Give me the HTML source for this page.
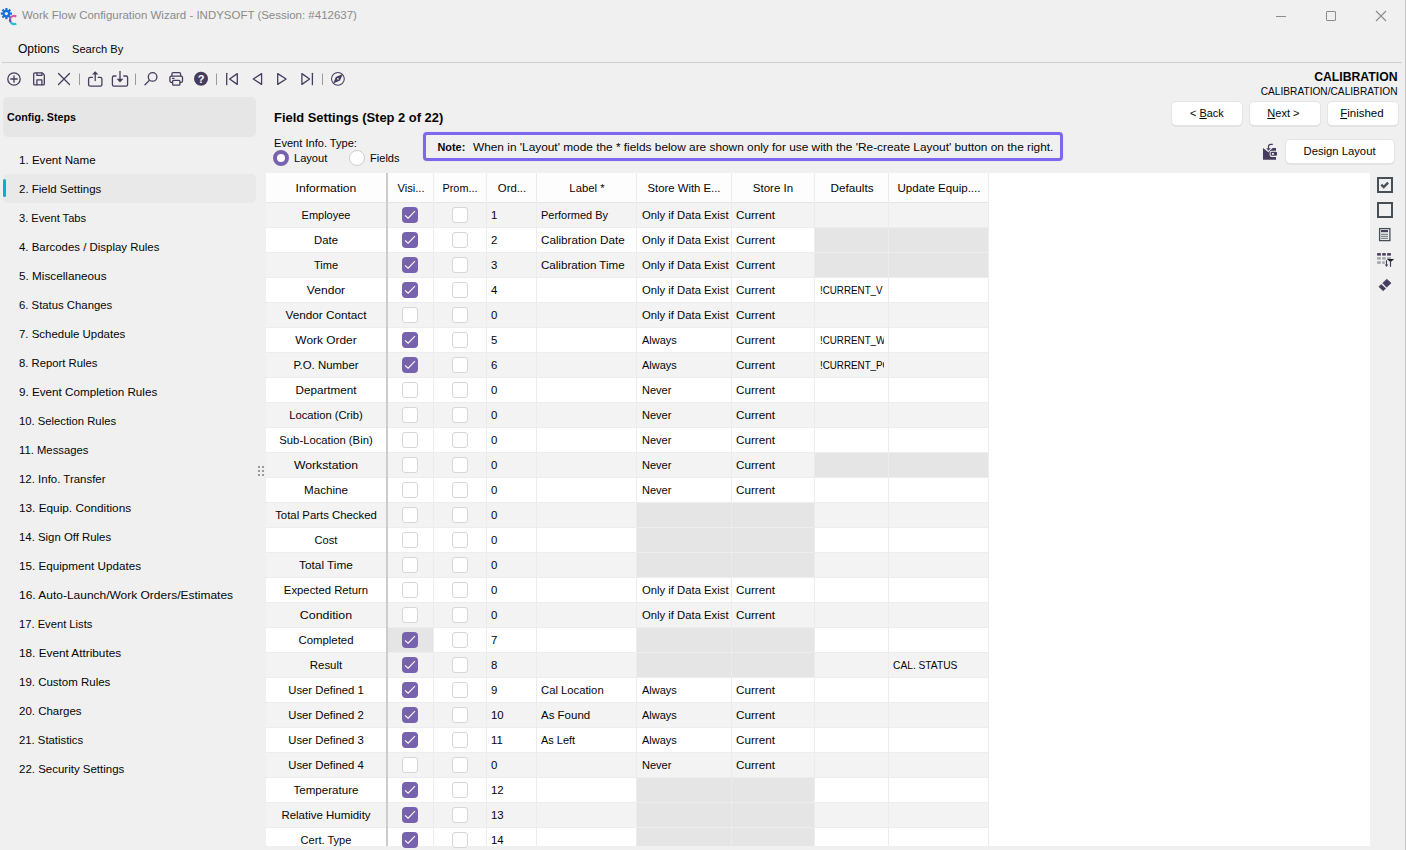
<!DOCTYPE html>
<html><head><meta charset="utf-8"><title>Work Flow Configuration Wizard</title>
<style>
html,body{margin:0;padding:0;}
body{width:1406px;height:850px;overflow:hidden;background:#f0f0f0;position:relative;font-family:"Liberation Sans",sans-serif;color:#050505;}
.t{position:absolute;white-space:nowrap;line-height:1;}
.a{position:absolute;}
.cb{position:absolute;width:14px;height:14px;border:1px solid #d6d6d6;border-radius:3px;background:#fff;}
.cbc{position:absolute;width:16px;height:16px;border-radius:4px;background:#7762ae;}
.btn{position:absolute;background:#fff;border-radius:4px;box-shadow:0 0 0 1px #e4e4e4, 0 1px 0 0.6px #d6d6d6;}
.clip{position:absolute;overflow:hidden;white-space:nowrap;line-height:1;}
</style></head><body>

<svg class="a" style="left:0;top:6px" width="20" height="20" viewBox="0 0 20 20">
<g fill="#1b6fd8"><circle cx="6.4" cy="7.6" r="3.9"/>
<rect x="5.3" y="2" width="2.2" height="11.2"/><rect x="0.8" y="6.5" width="11.2" height="2.2"/>
<rect x="5.3" y="2" width="2.2" height="11.2" transform="rotate(45 6.4 7.6)"/><rect x="5.3" y="2" width="2.2" height="11.2" transform="rotate(-45 6.4 7.6)"/></g>
<circle cx="6.4" cy="7.6" r="1.6" fill="#f0f0f0"/>
<path d="M16.3 10.6 A3.9 3.9 0 0 0 10.4 12.2" stroke="#e0559c" stroke-width="2.1" fill="none"/>
<path d="M10.4 12.2 A3.9 3.9 0 0 0 10.9 16.4" stroke="#6a4fa8" stroke-width="2.1" fill="none"/>
<path d="M10.9 16.4 A3.9 3.9 0 0 0 16.3 17.6" stroke="#1ec0e0" stroke-width="2.1" fill="none"/>
</svg>
<div class="t" style="left:22px;top:9.99px;font-size:11.47px;color:#8a8a8a;">Work Flow Configuration Wizard - INDYSOFT (Session: #412637)</div>
<div class="a" style="left:1276px;top:16px;width:10px;height:1px;background:#8c8c8c"></div>
<div class="a" style="left:1326px;top:11px;width:8px;height:8px;border:1px solid #8c8c8c;border-radius:1px"></div>
<svg class="a" style="left:1375px;top:10px" width="12" height="12" viewBox="0 0 12 12"><path d="M1 1L11 11M11 1L1 11" stroke="#8c8c8c" stroke-width="1.1"/></svg>
<div class="a" style="left:1405px;top:0;width:1px;height:850px;background:#c4c4c4"></div>
<div class="t" style="left:18px;top:42.81px;font-size:12.04px;">Options</div>
<div class="t" style="left:72px;top:43.60px;font-size:11.1px;">Search By</div>
<div class="a" style="left:2px;top:62px;width:1400px;height:1px;background:#cfcfcf"></div>
<svg class="a" style="left:0;top:64px" width="360" height="30" viewBox="0 64 360 30">
<g fill="none" stroke="#463c5e" stroke-width="1.3" stroke-linejoin="round" stroke-linecap="round">
<circle cx="14" cy="79" r="6.2"/><path d="M14 75.8v6.4M10.8 79h6.4"/>
<path d="M34.9 72.9H42.3L44.3 74.9V84Q44.3 84.9 43.4 84.9H34.6Q33.7 84.9 33.7 84V74.1Q33.7 72.9 34.9 72.9Z"/>
<path d="M36.9 73.2V75.4H41.9V73.2M36.9 84.7V79.8H41.9V84.7"/>
<path d="M58.5 73.5L69.5 84.5M69.5 73.5L58.5 84.5"/>
<path d="M92.5 77.3H90.3Q88.6 77.3 88.6 79V84.6Q88.6 86.2 90.3 86.2H100.3Q101.9 86.2 101.9 84.6V79Q101.9 77.3 100.3 77.3H98.2"/><path d="M95.2 80.6V73"/>
<path d="M116 76H114Q112.4 76 112.4 77.7V84.6Q112.4 86.2 114 86.2H126Q127.6 86.2 127.6 84.6V77.7Q127.6 76 126 76H123.8"/><path d="M120 71.5V79.5"/>
<circle cx="152.6" cy="76.9" r="4.3"/><path d="M149.3 80.4L145 84.8"/>
<path d="M171.9 75.8V73.9Q171.9 72.6 173.2 72.6H179.3Q180.6 72.6 180.6 73.9V75.8"/>
<path d="M172 82.4H171.3Q169.9 82.4 169.9 81V77.5Q169.9 76.1 171.3 76.1H181.1Q182.5 76.1 182.5 77.5V81Q182.5 82.4 181.1 82.4H180.4"/>
<rect x="172.6" y="80.3" width="7.3" height="4.9" rx="1"/>
<path d="M172.5 78.3H174"/>
<path d="M226.7 73.3V84.7"/><path d="M237.3 73.6V84.4L229.6 79Z"/>
<path d="M261.6 73.6V84.4L253.2 79Z"/>
<path d="M277.7 73.6V84.4L286.1 79Z"/>
<path d="M301.9 73.6V84.4L309.6 79Z"/><path d="M312.4 73.3V84.7"/>
</g>
<circle cx="337.9" cy="78.8" r="6.4" fill="none" stroke="#463c5e" stroke-width="1.05"/>
<path d="M342.8 74.1L340 80.6 333.1 83.5 335.9 77Z" fill="#463c5e"/><circle cx="337.95" cy="78.8" r="0.9" fill="#f0f0f0"/>
<path d="M92 74.6L95.2 71.2 98.4 74.6Z" fill="#463c5e"/>
<path d="M116.6 78.7L120 82.4 123.4 78.7Z" fill="#463c5e"/>
<g stroke="#9a9a9a" stroke-width="1"><path d="M79.5 73.5v11.5M135.5 73.5v11.5M216.5 73.5v11.5M322.5 73.5v11.5"/></g>
<circle cx="201" cy="78.8" r="7" fill="#463c5e"/>
<text x="201" y="83" font-family="Liberation Sans" font-weight="bold" font-size="11" fill="#fff" text-anchor="middle">?</text>
</svg>
<div class="a" style="left:3px;top:97px;width:253px;height:40px;background:#e6e6e6;border-radius:5px"></div>
<div class="t" style="left:7px;top:111.93px;font-size:10.71px;font-weight:bold;">Config. Steps</div>
<div class="a" style="left:3px;top:174px;width:253px;height:29px;background:#e9e9e9;border-radius:5px"></div>
<div class="a" style="left:3px;top:179px;width:3px;height:18px;background:#00b0d8;border-radius:2px"></div>
<div class="t" style="top:154.85px;font-size:11.4px;left:19px;transform-origin:0 0;transform:scaleX(1.0173);">1. Event Name</div>
<div class="t" style="top:183.85px;font-size:11.4px;left:19px;transform-origin:0 0;transform:scaleX(1.0069);">2. Field Settings</div>
<div class="t" style="top:212.85px;font-size:11.4px;left:19px;transform-origin:0 0;transform:scaleX(0.9744);">3. Event Tabs</div>
<div class="t" style="top:241.85px;font-size:11.4px;left:19px;transform-origin:0 0;transform:scaleX(1.0034);">4. Barcodes / Display Rules</div>
<div class="t" style="top:270.85px;font-size:11.4px;left:19px;transform-origin:0 0;transform:scaleX(1.0317);">5. Miscellaneous</div>
<div class="t" style="top:299.85px;font-size:11.4px;left:19px;transform-origin:0 0;transform:scaleX(0.9948);">6. Status Changes</div>
<div class="t" style="top:328.85px;font-size:11.4px;left:19px;transform-origin:0 0;transform:scaleX(1.0044);">7. Schedule Updates</div>
<div class="t" style="top:357.85px;font-size:11.4px;left:19px;transform-origin:0 0;transform:scaleX(0.9899);">8. Report Rules</div>
<div class="t" style="top:386.85px;font-size:11.4px;left:19px;transform-origin:0 0;transform:scaleX(1.0255);">9. Event Completion Rules</div>
<div class="t" style="top:415.85px;font-size:11.4px;left:19px;transform-origin:0 0;transform:scaleX(0.9886);">10. Selection Rules</div>
<div class="t" style="top:444.85px;font-size:11.4px;left:19px;transform-origin:0 0;transform:scaleX(0.9897);">11. Messages</div>
<div class="t" style="top:473.85px;font-size:11.4px;left:19px;transform-origin:0 0;transform:scaleX(1.0050);">12. Info. Transfer</div>
<div class="t" style="top:502.85px;font-size:11.4px;left:19px;transform-origin:0 0;transform:scaleX(1.0354);">13. Equip. Conditions</div>
<div class="t" style="top:531.85px;font-size:11.4px;left:19px;transform-origin:0 0;transform:scaleX(0.9989);">14. Sign Off Rules</div>
<div class="t" style="top:560.85px;font-size:11.4px;left:19px;transform-origin:0 0;transform:scaleX(1.0257);">15. Equipment Updates</div>
<div class="t" style="top:589.85px;font-size:11.4px;left:19px;transform-origin:0 0;transform:scaleX(1.0510);">16. Auto-Launch/Work Orders/Estimates</div>
<div class="t" style="top:618.85px;font-size:11.4px;left:19px;transform-origin:0 0;transform:scaleX(0.9817);">17. Event Lists</div>
<div class="t" style="top:647.85px;font-size:11.4px;left:19px;transform-origin:0 0;transform:scaleX(1.0338);">18. Event Attributes</div>
<div class="t" style="top:676.85px;font-size:11.4px;left:19px;transform-origin:0 0;transform:scaleX(1.0088);">19. Custom Rules</div>
<div class="t" style="top:705.85px;font-size:11.4px;left:19px;transform-origin:0 0;transform:scaleX(1.0081);">20. Charges</div>
<div class="t" style="top:734.85px;font-size:11.4px;left:19px;transform-origin:0 0;transform:scaleX(0.9934);">21. Statistics</div>
<div class="t" style="top:763.85px;font-size:11.4px;left:19px;transform-origin:0 0;transform:scaleX(1.0081);">22. Security Settings</div>
<div class="a" style="left:258px;top:466px;width:2px;height:2px;background:#9a9a9a"></div>
<div class="a" style="left:262px;top:466px;width:2px;height:2px;background:#9a9a9a"></div>
<div class="a" style="left:258px;top:470px;width:2px;height:2px;background:#9a9a9a"></div>
<div class="a" style="left:262px;top:470px;width:2px;height:2px;background:#9a9a9a"></div>
<div class="a" style="left:258px;top:474px;width:2px;height:2px;background:#9a9a9a"></div>
<div class="a" style="left:262px;top:474px;width:2px;height:2px;background:#9a9a9a"></div>
<div class="t" style="left:274px;top:112.06px;font-size:12.92px;font-weight:bold;">Field Settings (Step 2 of 22)</div>
<div class="t" style="left:274px;top:137.61px;font-size:11.09px;">Event Info. Type:</div>
<div class="a" style="left:273px;top:150px;width:8px;height:8px;border:4px solid #7762ae;border-radius:50%;background:#fff"></div>
<div class="t" style="left:294px;top:152.61px;font-size:11.09px;">Layout</div>
<div class="a" style="left:349px;top:150px;width:14px;height:14px;border:1px solid #cfcfcf;border-radius:50%;background:#fff"></div>
<div class="t" style="left:370px;top:152.61px;font-size:11.09px;">Fields</div>
<div class="a" style="left:423px;top:132px;width:634px;height:23px;border:3px solid #7b68ee;border-radius:4px;box-shadow:0 0 1px rgba(0,0,0,.25)"></div>
<div class="t" style="left:437.5px;top:141.99px;font-size:10.88px;font-weight:bold;">Note:</div>
<div class="t" style="top:141.55px;font-size:11.4px;left:473px;transform-origin:0 0;transform:scaleX(1.0407);">When in 'Layout' mode the * fields below are shown only for use with the 'Re-create Layout' button on the right.</div>
<div class="t" style="right:8.5px;text-align:right;top:70.64px;font-size:12.24px;font-weight:bold;">CALIBRATION</div>
<div class="t" style="right:8.5px;text-align:right;top:87.19px;font-size:10.17px;">CALIBRATION/CALIBRATION</div>
<div class="btn" style="left:1172px;top:102px;width:70px;height:23px"></div>
<div class="btn" style="left:1250px;top:102px;width:70px;height:23px"></div>
<div class="btn" style="left:1328px;top:102px;width:70px;height:23px"></div>
<div class="t" style="left:1190px;top:107.97px;font-size:10.9px;">&lt; <u>B</u>ack</div>
<div class="t" style="left:1267.3px;top:107.85px;font-size:11.04px;"><u>N</u>ext &gt;</div>
<div class="t" style="left:1340.2px;top:108.08px;font-size:11.48px;"><u>F</u>inished</div>
<div class="btn" style="left:1286px;top:140px;width:108px;height:23px"></div>
<div class="t" style="left:1303.5px;top:145.85px;font-size:11.28px;">Design Layout</div>
<svg class="a" style="left:1258px;top:140px" width="24" height="24" viewBox="0 0 24 24">
<path d="M5 8L10.5 12.2 14.6 8H18V19.8H5Z" fill="#463c5e"/>
<rect x="11.6" y="10.7" width="9" height="6.2" rx="2.2" fill="#f0f0f0"/>
<rect x="12.6" y="11.8" width="6.4" height="4" rx="1.2" fill="#463c5e"/>
<rect x="14" y="13" width="1.9" height="1.7" fill="#f0f0f0"/>
<path d="M14.8 4.4H12.6Q10.5 4.4 10.5 6.5V8.6" stroke="#463c5e" stroke-width="1.2" fill="none"/>
<path d="M8.2 8.3H12.8L10.5 10.7Z" fill="#463c5e"/>
</svg>
<div class="a" style="left:266px;top:173px;width:1104px;height:673px;background:#fff"></div>
<div class="a" style="left:266px;top:173px;width:722px;height:29px;background:#fdfdfd"></div>
<div class="a" style="left:266px;top:202px;width:722px;height:1px;background:#e6e6e6"></div>
<div class="t" style="top:183.35px;font-size:11.4px;left:176.0px;width:300px;text-align:center;transform:scaleX(1.0662);">Information</div>
<div class="t" style="top:183.35px;font-size:11.4px;left:260.5px;width:300px;text-align:center;transform:scaleX(0.9796);">Visi...</div>
<div class="t" style="top:183.35px;font-size:11.4px;left:310.0px;width:300px;text-align:center;transform:scaleX(0.9527);">Prom...</div>
<div class="t" style="top:183.35px;font-size:11.4px;left:361.5px;width:300px;text-align:center;transform:scaleX(0.9964);">Ord...</div>
<div class="t" style="top:183.35px;font-size:11.4px;left:436.5px;width:300px;text-align:center;transform:scaleX(0.9945);">Label *</div>
<div class="t" style="top:183.35px;font-size:11.4px;left:534.0px;width:300px;text-align:center;transform:scaleX(0.9948);">Store With E...</div>
<div class="t" style="top:183.35px;font-size:11.4px;left:623.0px;width:300px;text-align:center;transform:scaleX(1.0095);">Store In</div>
<div class="t" style="top:183.35px;font-size:11.4px;left:701.5px;width:300px;text-align:center;transform:scaleX(1.0306);">Defaults</div>
<div class="t" style="top:183.35px;font-size:11.4px;left:788.5px;width:300px;text-align:center;transform:scaleX(1.0165);">Update Equip....</div>
<div class="a" style="left:266px;top:203px;width:722px;height:24px;background:#f3f3f3"></div>
<div class="t" style="top:210.35px;font-size:11.4px;left:176px;width:300px;text-align:center;transform:scaleX(0.9647);">Employee</div>
<svg class="a" style="left:402px;top:207px" width="16" height="16" viewBox="0 0 16 16"><rect width="16" height="16" rx="4" fill="#7762ae"/><path d="M3 8.3L6.1 11.2 13 4.2" stroke="#fff" stroke-width="1.05" fill="none"/></svg>
<div class="cb" style="left:452px;top:207px"></div>
<div class="t" style="left:491px;top:210.35px;font-size:11.4px;">1</div>
<div class="t" style="top:210.35px;font-size:11.4px;left:541px;transform-origin:0 0;transform:scaleX(0.9629);">Performed By</div>
<div class="t" style="top:210.35px;font-size:11.4px;left:641.6px;transform-origin:0 0;transform:scaleX(0.9906);">Only if Data Exist</div>
<div class="t" style="top:210.35px;font-size:11.4px;left:736.4px;transform-origin:0 0;transform:scaleX(1.0260);">Current</div>
<div class="a" style="left:266px;top:228px;width:722px;height:24px;background:#ffffff"></div>
<div class="a" style="left:266px;top:227px;width:722px;height:1px;background:#ededed"></div>
<div class="a" style="left:815px;top:228px;width:73px;height:24px;background:#e5e5e5"></div>
<div class="a" style="left:889px;top:228px;width:99px;height:24px;background:#e5e5e5"></div>
<div class="t" style="top:235.35px;font-size:11.4px;left:176px;width:300px;text-align:center;transform:scaleX(0.9884);">Date</div>
<svg class="a" style="left:402px;top:232px" width="16" height="16" viewBox="0 0 16 16"><rect width="16" height="16" rx="4" fill="#7762ae"/><path d="M3 8.3L6.1 11.2 13 4.2" stroke="#fff" stroke-width="1.05" fill="none"/></svg>
<div class="cb" style="left:452px;top:232px"></div>
<div class="t" style="left:491px;top:235.35px;font-size:11.4px;">2</div>
<div class="t" style="top:235.35px;font-size:11.4px;left:541px;transform-origin:0 0;transform:scaleX(1.0240);">Calibration Date</div>
<div class="t" style="top:235.35px;font-size:11.4px;left:641.6px;transform-origin:0 0;transform:scaleX(0.9906);">Only if Data Exist</div>
<div class="t" style="top:235.35px;font-size:11.4px;left:736.4px;transform-origin:0 0;transform:scaleX(1.0260);">Current</div>
<div class="a" style="left:266px;top:253px;width:722px;height:24px;background:#f3f3f3"></div>
<div class="a" style="left:266px;top:252px;width:722px;height:1px;background:#ededed"></div>
<div class="a" style="left:815px;top:253px;width:73px;height:24px;background:#e5e5e5"></div>
<div class="a" style="left:889px;top:253px;width:99px;height:24px;background:#e5e5e5"></div>
<div class="t" style="top:260.35px;font-size:11.4px;left:176px;width:300px;text-align:center;transform:scaleX(0.9675);">Time</div>
<svg class="a" style="left:402px;top:257px" width="16" height="16" viewBox="0 0 16 16"><rect width="16" height="16" rx="4" fill="#7762ae"/><path d="M3 8.3L6.1 11.2 13 4.2" stroke="#fff" stroke-width="1.05" fill="none"/></svg>
<div class="cb" style="left:452px;top:257px"></div>
<div class="t" style="left:491px;top:260.35px;font-size:11.4px;">3</div>
<div class="t" style="top:260.35px;font-size:11.4px;left:541px;transform-origin:0 0;transform:scaleX(1.0163);">Calibration Time</div>
<div class="t" style="top:260.35px;font-size:11.4px;left:641.6px;transform-origin:0 0;transform:scaleX(0.9906);">Only if Data Exist</div>
<div class="t" style="top:260.35px;font-size:11.4px;left:736.4px;transform-origin:0 0;transform:scaleX(1.0260);">Current</div>
<div class="a" style="left:266px;top:278px;width:722px;height:24px;background:#ffffff"></div>
<div class="a" style="left:266px;top:277px;width:722px;height:1px;background:#ededed"></div>
<div class="t" style="top:285.35px;font-size:11.4px;left:176px;width:300px;text-align:center;transform:scaleX(1.0601);">Vendor</div>
<svg class="a" style="left:402px;top:282px" width="16" height="16" viewBox="0 0 16 16"><rect width="16" height="16" rx="4" fill="#7762ae"/><path d="M3 8.3L6.1 11.2 13 4.2" stroke="#fff" stroke-width="1.05" fill="none"/></svg>
<div class="cb" style="left:452px;top:282px"></div>
<div class="t" style="left:491px;top:285.35px;font-size:11.4px;">4</div>
<div class="t" style="top:285.35px;font-size:11.4px;left:641.6px;transform-origin:0 0;transform:scaleX(0.9906);">Only if Data Exist</div>
<div class="t" style="top:285.35px;font-size:11.4px;left:736.4px;transform-origin:0 0;transform:scaleX(1.0260);">Current</div>
<div class="clip" style="left:819.7px;top:285.35px;width:64.3px;height:16px;font-size:11.4px"><div style="transform-origin:0 0;transform:scaleX(0.86)">!CURRENT_V</div></div>
<div class="a" style="left:266px;top:303px;width:722px;height:24px;background:#f3f3f3"></div>
<div class="a" style="left:266px;top:302px;width:722px;height:1px;background:#ededed"></div>
<div class="t" style="top:310.35px;font-size:11.4px;left:176px;width:300px;text-align:center;transform:scaleX(1.0308);">Vendor Contact</div>
<div class="cb" style="left:402px;top:307px"></div>
<div class="cb" style="left:452px;top:307px"></div>
<div class="t" style="left:491px;top:310.35px;font-size:11.4px;">0</div>
<div class="t" style="top:310.35px;font-size:11.4px;left:641.6px;transform-origin:0 0;transform:scaleX(0.9906);">Only if Data Exist</div>
<div class="t" style="top:310.35px;font-size:11.4px;left:736.4px;transform-origin:0 0;transform:scaleX(1.0260);">Current</div>
<div class="a" style="left:266px;top:328px;width:722px;height:24px;background:#ffffff"></div>
<div class="a" style="left:266px;top:327px;width:722px;height:1px;background:#ededed"></div>
<div class="t" style="top:335.35px;font-size:11.4px;left:176px;width:300px;text-align:center;transform:scaleX(1.0444);">Work Order</div>
<svg class="a" style="left:402px;top:332px" width="16" height="16" viewBox="0 0 16 16"><rect width="16" height="16" rx="4" fill="#7762ae"/><path d="M3 8.3L6.1 11.2 13 4.2" stroke="#fff" stroke-width="1.05" fill="none"/></svg>
<div class="cb" style="left:452px;top:332px"></div>
<div class="t" style="left:491px;top:335.35px;font-size:11.4px;">5</div>
<div class="t" style="top:335.35px;font-size:11.4px;left:641.6px;transform-origin:0 0;transform:scaleX(0.9637);">Always</div>
<div class="t" style="top:335.35px;font-size:11.4px;left:736.4px;transform-origin:0 0;transform:scaleX(1.0260);">Current</div>
<div class="clip" style="left:819.7px;top:335.35px;width:64.3px;height:16px;font-size:11.4px"><div style="transform-origin:0 0;transform:scaleX(0.86)">!CURRENT_W</div></div>
<div class="a" style="left:266px;top:353px;width:722px;height:24px;background:#f3f3f3"></div>
<div class="a" style="left:266px;top:352px;width:722px;height:1px;background:#ededed"></div>
<div class="t" style="top:360.35px;font-size:11.4px;left:176px;width:300px;text-align:center;transform:scaleX(1.0024);">P.O. Number</div>
<svg class="a" style="left:402px;top:357px" width="16" height="16" viewBox="0 0 16 16"><rect width="16" height="16" rx="4" fill="#7762ae"/><path d="M3 8.3L6.1 11.2 13 4.2" stroke="#fff" stroke-width="1.05" fill="none"/></svg>
<div class="cb" style="left:452px;top:357px"></div>
<div class="t" style="left:491px;top:360.35px;font-size:11.4px;">6</div>
<div class="t" style="top:360.35px;font-size:11.4px;left:641.6px;transform-origin:0 0;transform:scaleX(0.9637);">Always</div>
<div class="t" style="top:360.35px;font-size:11.4px;left:736.4px;transform-origin:0 0;transform:scaleX(1.0260);">Current</div>
<div class="clip" style="left:819.7px;top:360.35px;width:64.3px;height:16px;font-size:11.4px"><div style="transform-origin:0 0;transform:scaleX(0.86)">!CURRENT_PO</div></div>
<div class="a" style="left:266px;top:378px;width:722px;height:24px;background:#ffffff"></div>
<div class="a" style="left:266px;top:377px;width:722px;height:1px;background:#ededed"></div>
<div class="t" style="top:385.35px;font-size:11.4px;left:176px;width:300px;text-align:center;transform:scaleX(1.0259);">Department</div>
<div class="cb" style="left:402px;top:382px"></div>
<div class="cb" style="left:452px;top:382px"></div>
<div class="t" style="left:491px;top:385.35px;font-size:11.4px;">0</div>
<div class="t" style="top:385.35px;font-size:11.4px;left:641.6px;transform-origin:0 0;transform:scaleX(0.9669);">Never</div>
<div class="t" style="top:385.35px;font-size:11.4px;left:736.4px;transform-origin:0 0;transform:scaleX(1.0260);">Current</div>
<div class="a" style="left:266px;top:403px;width:722px;height:24px;background:#f3f3f3"></div>
<div class="a" style="left:266px;top:402px;width:722px;height:1px;background:#ededed"></div>
<div class="t" style="top:410.35px;font-size:11.4px;left:176px;width:300px;text-align:center;transform:scaleX(0.9859);">Location (Crib)</div>
<div class="cb" style="left:402px;top:407px"></div>
<div class="cb" style="left:452px;top:407px"></div>
<div class="t" style="left:491px;top:410.35px;font-size:11.4px;">0</div>
<div class="t" style="top:410.35px;font-size:11.4px;left:641.6px;transform-origin:0 0;transform:scaleX(0.9669);">Never</div>
<div class="t" style="top:410.35px;font-size:11.4px;left:736.4px;transform-origin:0 0;transform:scaleX(1.0260);">Current</div>
<div class="a" style="left:266px;top:428px;width:722px;height:24px;background:#ffffff"></div>
<div class="a" style="left:266px;top:427px;width:722px;height:1px;background:#ededed"></div>
<div class="t" style="top:435.35px;font-size:11.4px;left:176px;width:300px;text-align:center;transform:scaleX(0.9893);">Sub-Location (Bin)</div>
<div class="cb" style="left:402px;top:432px"></div>
<div class="cb" style="left:452px;top:432px"></div>
<div class="t" style="left:491px;top:435.35px;font-size:11.4px;">0</div>
<div class="t" style="top:435.35px;font-size:11.4px;left:641.6px;transform-origin:0 0;transform:scaleX(0.9669);">Never</div>
<div class="t" style="top:435.35px;font-size:11.4px;left:736.4px;transform-origin:0 0;transform:scaleX(1.0260);">Current</div>
<div class="a" style="left:266px;top:453px;width:722px;height:24px;background:#f3f3f3"></div>
<div class="a" style="left:266px;top:452px;width:722px;height:1px;background:#ededed"></div>
<div class="a" style="left:815px;top:453px;width:73px;height:24px;background:#e5e5e5"></div>
<div class="a" style="left:889px;top:453px;width:99px;height:24px;background:#e5e5e5"></div>
<div class="t" style="top:460.35px;font-size:11.4px;left:176px;width:300px;text-align:center;transform:scaleX(1.0705);">Workstation</div>
<div class="cb" style="left:402px;top:457px"></div>
<div class="cb" style="left:452px;top:457px"></div>
<div class="t" style="left:491px;top:460.35px;font-size:11.4px;">0</div>
<div class="t" style="top:460.35px;font-size:11.4px;left:641.6px;transform-origin:0 0;transform:scaleX(0.9669);">Never</div>
<div class="t" style="top:460.35px;font-size:11.4px;left:736.4px;transform-origin:0 0;transform:scaleX(1.0260);">Current</div>
<div class="a" style="left:266px;top:478px;width:722px;height:24px;background:#ffffff"></div>
<div class="a" style="left:266px;top:477px;width:722px;height:1px;background:#ededed"></div>
<div class="t" style="top:485.35px;font-size:11.4px;left:176px;width:300px;text-align:center;transform:scaleX(1.0212);">Machine</div>
<div class="cb" style="left:402px;top:482px"></div>
<div class="cb" style="left:452px;top:482px"></div>
<div class="t" style="left:491px;top:485.35px;font-size:11.4px;">0</div>
<div class="t" style="top:485.35px;font-size:11.4px;left:641.6px;transform-origin:0 0;transform:scaleX(0.9669);">Never</div>
<div class="t" style="top:485.35px;font-size:11.4px;left:736.4px;transform-origin:0 0;transform:scaleX(1.0260);">Current</div>
<div class="a" style="left:266px;top:503px;width:722px;height:24px;background:#f3f3f3"></div>
<div class="a" style="left:266px;top:502px;width:722px;height:1px;background:#ededed"></div>
<div class="a" style="left:637px;top:503px;width:94px;height:24px;background:#e5e5e5"></div>
<div class="a" style="left:732px;top:503px;width:82px;height:24px;background:#e5e5e5"></div>
<div class="t" style="top:510.35px;font-size:11.4px;left:176px;width:300px;text-align:center;transform:scaleX(0.9970);">Total Parts Checked</div>
<div class="cb" style="left:402px;top:507px"></div>
<div class="cb" style="left:452px;top:507px"></div>
<div class="t" style="left:491px;top:510.35px;font-size:11.4px;">0</div>
<div class="a" style="left:266px;top:528px;width:722px;height:24px;background:#ffffff"></div>
<div class="a" style="left:266px;top:527px;width:722px;height:1px;background:#ededed"></div>
<div class="a" style="left:637px;top:528px;width:94px;height:24px;background:#e5e5e5"></div>
<div class="a" style="left:732px;top:528px;width:82px;height:24px;background:#e5e5e5"></div>
<div class="t" style="top:535.35px;font-size:11.4px;left:176px;width:300px;text-align:center;transform:scaleX(0.9727);">Cost</div>
<div class="cb" style="left:402px;top:532px"></div>
<div class="cb" style="left:452px;top:532px"></div>
<div class="t" style="left:491px;top:535.35px;font-size:11.4px;">0</div>
<div class="a" style="left:266px;top:553px;width:722px;height:24px;background:#f3f3f3"></div>
<div class="a" style="left:266px;top:552px;width:722px;height:1px;background:#ededed"></div>
<div class="a" style="left:637px;top:553px;width:94px;height:24px;background:#e5e5e5"></div>
<div class="a" style="left:732px;top:553px;width:82px;height:24px;background:#e5e5e5"></div>
<div class="t" style="top:560.35px;font-size:11.4px;left:176px;width:300px;text-align:center;transform:scaleX(1.0356);">Total Time</div>
<div class="cb" style="left:402px;top:557px"></div>
<div class="cb" style="left:452px;top:557px"></div>
<div class="t" style="left:491px;top:560.35px;font-size:11.4px;">0</div>
<div class="a" style="left:266px;top:578px;width:722px;height:24px;background:#ffffff"></div>
<div class="a" style="left:266px;top:577px;width:722px;height:1px;background:#ededed"></div>
<div class="t" style="top:585.35px;font-size:11.4px;left:176px;width:300px;text-align:center;transform:scaleX(0.9928);">Expected Return</div>
<div class="cb" style="left:402px;top:582px"></div>
<div class="cb" style="left:452px;top:582px"></div>
<div class="t" style="left:491px;top:585.35px;font-size:11.4px;">0</div>
<div class="t" style="top:585.35px;font-size:11.4px;left:641.6px;transform-origin:0 0;transform:scaleX(0.9906);">Only if Data Exist</div>
<div class="t" style="top:585.35px;font-size:11.4px;left:736.4px;transform-origin:0 0;transform:scaleX(1.0260);">Current</div>
<div class="a" style="left:266px;top:603px;width:722px;height:24px;background:#f3f3f3"></div>
<div class="a" style="left:266px;top:602px;width:722px;height:1px;background:#ededed"></div>
<div class="t" style="top:610.35px;font-size:11.4px;left:176px;width:300px;text-align:center;transform:scaleX(1.0859);">Condition</div>
<div class="cb" style="left:402px;top:607px"></div>
<div class="cb" style="left:452px;top:607px"></div>
<div class="t" style="left:491px;top:610.35px;font-size:11.4px;">0</div>
<div class="t" style="top:610.35px;font-size:11.4px;left:641.6px;transform-origin:0 0;transform:scaleX(0.9906);">Only if Data Exist</div>
<div class="t" style="top:610.35px;font-size:11.4px;left:736.4px;transform-origin:0 0;transform:scaleX(1.0260);">Current</div>
<div class="a" style="left:266px;top:628px;width:722px;height:24px;background:#ffffff"></div>
<div class="a" style="left:266px;top:627px;width:722px;height:1px;background:#ededed"></div>
<div class="a" style="left:388px;top:628px;width:45px;height:24px;background:#e5e5e5"></div>
<div class="a" style="left:637px;top:628px;width:94px;height:24px;background:#e5e5e5"></div>
<div class="a" style="left:732px;top:628px;width:82px;height:24px;background:#e5e5e5"></div>
<div class="t" style="top:635.35px;font-size:11.4px;left:176px;width:300px;text-align:center;transform:scaleX(1.0000);">Completed</div>
<svg class="a" style="left:402px;top:632px" width="16" height="16" viewBox="0 0 16 16"><rect width="16" height="16" rx="4" fill="#7762ae"/><path d="M3 8.3L6.1 11.2 13 4.2" stroke="#fff" stroke-width="1.05" fill="none"/></svg>
<div class="cb" style="left:452px;top:632px"></div>
<div class="t" style="left:491px;top:635.35px;font-size:11.4px;">7</div>
<div class="a" style="left:266px;top:653px;width:722px;height:24px;background:#f3f3f3"></div>
<div class="a" style="left:266px;top:652px;width:722px;height:1px;background:#ededed"></div>
<div class="a" style="left:637px;top:653px;width:94px;height:24px;background:#e5e5e5"></div>
<div class="a" style="left:732px;top:653px;width:82px;height:24px;background:#e5e5e5"></div>
<div class="t" style="top:660.35px;font-size:11.4px;left:176px;width:300px;text-align:center;transform:scaleX(1.0027);">Result</div>
<svg class="a" style="left:402px;top:657px" width="16" height="16" viewBox="0 0 16 16"><rect width="16" height="16" rx="4" fill="#7762ae"/><path d="M3 8.3L6.1 11.2 13 4.2" stroke="#fff" stroke-width="1.05" fill="none"/></svg>
<div class="cb" style="left:452px;top:657px"></div>
<div class="t" style="left:491px;top:660.35px;font-size:11.4px;">8</div>
<div class="t" style="top:660.35px;font-size:11.4px;left:893px;transform-origin:0 0;transform:scaleX(0.8971);">CAL. STATUS</div>
<div class="a" style="left:266px;top:678px;width:722px;height:24px;background:#ffffff"></div>
<div class="a" style="left:266px;top:677px;width:722px;height:1px;background:#ededed"></div>
<div class="t" style="top:685.35px;font-size:11.4px;left:176px;width:300px;text-align:center;transform:scaleX(0.9943);">User Defined 1</div>
<svg class="a" style="left:402px;top:682px" width="16" height="16" viewBox="0 0 16 16"><rect width="16" height="16" rx="4" fill="#7762ae"/><path d="M3 8.3L6.1 11.2 13 4.2" stroke="#fff" stroke-width="1.05" fill="none"/></svg>
<div class="cb" style="left:452px;top:682px"></div>
<div class="t" style="left:491px;top:685.35px;font-size:11.4px;">9</div>
<div class="t" style="top:685.35px;font-size:11.4px;left:541px;transform-origin:0 0;transform:scaleX(0.9894);">Cal Location</div>
<div class="t" style="top:685.35px;font-size:11.4px;left:641.6px;transform-origin:0 0;transform:scaleX(0.9637);">Always</div>
<div class="t" style="top:685.35px;font-size:11.4px;left:736.4px;transform-origin:0 0;transform:scaleX(1.0260);">Current</div>
<div class="a" style="left:266px;top:703px;width:722px;height:24px;background:#f3f3f3"></div>
<div class="a" style="left:266px;top:702px;width:722px;height:1px;background:#ededed"></div>
<div class="t" style="top:710.35px;font-size:11.4px;left:176px;width:300px;text-align:center;transform:scaleX(0.9943);">User Defined 2</div>
<svg class="a" style="left:402px;top:707px" width="16" height="16" viewBox="0 0 16 16"><rect width="16" height="16" rx="4" fill="#7762ae"/><path d="M3 8.3L6.1 11.2 13 4.2" stroke="#fff" stroke-width="1.05" fill="none"/></svg>
<div class="cb" style="left:452px;top:707px"></div>
<div class="t" style="left:491px;top:710.35px;font-size:11.4px;">10</div>
<div class="t" style="top:710.35px;font-size:11.4px;left:541px;transform-origin:0 0;transform:scaleX(1.0084);">As Found</div>
<div class="t" style="top:710.35px;font-size:11.4px;left:641.6px;transform-origin:0 0;transform:scaleX(0.9637);">Always</div>
<div class="t" style="top:710.35px;font-size:11.4px;left:736.4px;transform-origin:0 0;transform:scaleX(1.0260);">Current</div>
<div class="a" style="left:266px;top:728px;width:722px;height:24px;background:#ffffff"></div>
<div class="a" style="left:266px;top:727px;width:722px;height:1px;background:#ededed"></div>
<div class="t" style="top:735.35px;font-size:11.4px;left:176px;width:300px;text-align:center;transform:scaleX(0.9943);">User Defined 3</div>
<svg class="a" style="left:402px;top:732px" width="16" height="16" viewBox="0 0 16 16"><rect width="16" height="16" rx="4" fill="#7762ae"/><path d="M3 8.3L6.1 11.2 13 4.2" stroke="#fff" stroke-width="1.05" fill="none"/></svg>
<div class="cb" style="left:452px;top:732px"></div>
<div class="t" style="left:491px;top:735.35px;font-size:11.4px;">11</div>
<div class="t" style="top:735.35px;font-size:11.4px;left:541px;transform-origin:0 0;transform:scaleX(0.9638);">As Left</div>
<div class="t" style="top:735.35px;font-size:11.4px;left:641.6px;transform-origin:0 0;transform:scaleX(0.9637);">Always</div>
<div class="t" style="top:735.35px;font-size:11.4px;left:736.4px;transform-origin:0 0;transform:scaleX(1.0260);">Current</div>
<div class="a" style="left:266px;top:753px;width:722px;height:24px;background:#f3f3f3"></div>
<div class="a" style="left:266px;top:752px;width:722px;height:1px;background:#ededed"></div>
<div class="t" style="top:760.35px;font-size:11.4px;left:176px;width:300px;text-align:center;transform:scaleX(0.9943);">User Defined 4</div>
<div class="cb" style="left:402px;top:757px"></div>
<div class="cb" style="left:452px;top:757px"></div>
<div class="t" style="left:491px;top:760.35px;font-size:11.4px;">0</div>
<div class="t" style="top:760.35px;font-size:11.4px;left:641.6px;transform-origin:0 0;transform:scaleX(0.9669);">Never</div>
<div class="t" style="top:760.35px;font-size:11.4px;left:736.4px;transform-origin:0 0;transform:scaleX(1.0260);">Current</div>
<div class="a" style="left:266px;top:778px;width:722px;height:24px;background:#ffffff"></div>
<div class="a" style="left:266px;top:777px;width:722px;height:1px;background:#ededed"></div>
<div class="a" style="left:637px;top:778px;width:94px;height:24px;background:#e5e5e5"></div>
<div class="a" style="left:732px;top:778px;width:82px;height:24px;background:#e5e5e5"></div>
<div class="t" style="top:785.35px;font-size:11.4px;left:176px;width:300px;text-align:center;transform:scaleX(1.0158);">Temperature</div>
<svg class="a" style="left:402px;top:782px" width="16" height="16" viewBox="0 0 16 16"><rect width="16" height="16" rx="4" fill="#7762ae"/><path d="M3 8.3L6.1 11.2 13 4.2" stroke="#fff" stroke-width="1.05" fill="none"/></svg>
<div class="cb" style="left:452px;top:782px"></div>
<div class="t" style="left:491px;top:785.35px;font-size:11.4px;">12</div>
<div class="a" style="left:266px;top:803px;width:722px;height:24px;background:#f3f3f3"></div>
<div class="a" style="left:266px;top:802px;width:722px;height:1px;background:#ededed"></div>
<div class="a" style="left:637px;top:803px;width:94px;height:24px;background:#e5e5e5"></div>
<div class="a" style="left:732px;top:803px;width:82px;height:24px;background:#e5e5e5"></div>
<div class="t" style="top:810.35px;font-size:11.4px;left:176px;width:300px;text-align:center;transform:scaleX(1.0057);">Relative Humidity</div>
<svg class="a" style="left:402px;top:807px" width="16" height="16" viewBox="0 0 16 16"><rect width="16" height="16" rx="4" fill="#7762ae"/><path d="M3 8.3L6.1 11.2 13 4.2" stroke="#fff" stroke-width="1.05" fill="none"/></svg>
<div class="cb" style="left:452px;top:807px"></div>
<div class="t" style="left:491px;top:810.35px;font-size:11.4px;">13</div>
<div class="a" style="left:266px;top:828px;width:722px;height:18px;background:#ffffff"></div>
<div class="a" style="left:266px;top:827px;width:722px;height:1px;background:#ededed"></div>
<div class="a" style="left:637px;top:828px;width:94px;height:18px;background:#e5e5e5"></div>
<div class="a" style="left:732px;top:828px;width:82px;height:18px;background:#e5e5e5"></div>
<div class="t" style="top:835.35px;font-size:11.4px;left:176px;width:300px;text-align:center;transform:scaleX(0.9718);">Cert. Type</div>
<svg class="a" style="left:402px;top:832px" width="16" height="16" viewBox="0 0 16 16"><rect width="16" height="16" rx="4" fill="#7762ae"/><path d="M3 8.3L6.1 11.2 13 4.2" stroke="#fff" stroke-width="1.05" fill="none"/></svg>
<div class="cb" style="left:452px;top:832px"></div>
<div class="t" style="left:491px;top:835.35px;font-size:11.4px;">14</div>
<div class="a" style="left:386px;top:173px;width:2px;height:673px;background:#cccccc"></div>
<div class="a" style="left:433px;top:173px;width:1px;height:673px;background:#ececec"></div>
<div class="a" style="left:486px;top:173px;width:1px;height:673px;background:#ececec"></div>
<div class="a" style="left:536px;top:173px;width:1px;height:673px;background:#ececec"></div>
<div class="a" style="left:636px;top:173px;width:1px;height:673px;background:#ececec"></div>
<div class="a" style="left:731px;top:173px;width:1px;height:673px;background:#ececec"></div>
<div class="a" style="left:814px;top:173px;width:1px;height:673px;background:#ececec"></div>
<div class="a" style="left:888px;top:173px;width:1px;height:673px;background:#ececec"></div>
<div class="a" style="left:988px;top:173px;width:1px;height:673px;background:#ececec"></div>
<svg class="a" style="left:1374px;top:174px" width="24" height="124" viewBox="1374 174 24 124">
<rect x="1378" y="178" width="14" height="14" fill="none" stroke="#474f55" stroke-width="2"/>
<path d="M1381.3 184.6l2.4 2.4 4.4-4.4" stroke="#474f55" stroke-width="2.4" fill="none"/>
<rect x="1378" y="203" width="14" height="14" fill="none" stroke="#474f55" stroke-width="2"/>
<rect x="1379.6" y="228.6" width="10.3" height="12" fill="none" stroke="#474f55" stroke-width="1.3"/>
<rect x="1381" y="230" width="7" height="2.2" fill="#463c5e"/>
<path d="M1381 234.3h7M1381 236.3h7M1381 238.3h7" stroke="#474f55" stroke-width="0.8"/>
<g fill="#463c5e"><rect x="1377.1" y="253.1" width="3.8" height="2.5"/><rect x="1382.2" y="253.1" width="3.6" height="2.5"/><rect x="1387.1" y="253.1" width="3.8" height="2.5"/></g>
<g fill="#a0a5a8"><rect x="1377.1" y="257.2" width="3.8" height="2.4"/><rect x="1382.2" y="257.2" width="3.6" height="2.4"/><rect x="1387.1" y="257.2" width="3.8" height="2.4"/><rect x="1377.1" y="261.3" width="3.8" height="2.5"/><rect x="1382.2" y="261.3" width="2.6" height="2.5"/></g>
<path d="M1386.9 259H1394.2L1391.3 261.6H1389.8Z" fill="#1a1a1a"/>
<path d="M1390.5 260.5V266.8" stroke="#463c5e" stroke-width="1.2"/>
<path d="M1386.5 260.2V265.5" stroke="#463c5e" stroke-width="1.1"/><path d="M1384.8 264.6L1386.5 266.9 1388.2 264.6Z" fill="#463c5e"/>
<path d="M1386.8 279.2L1391.1 283.1 1386.6 287.2 1382.7 283Z" fill="#463c5e" stroke="#463c5e" stroke-width="0.6" stroke-linejoin="round"/>
<path d="M1381.1 284.4L1385.6 288.4 1383.2 290.8 1378.9 286.8Z" fill="#463c5e" stroke="#463c5e" stroke-width="0.6" stroke-linejoin="round"/>
</svg>
</body></html>
